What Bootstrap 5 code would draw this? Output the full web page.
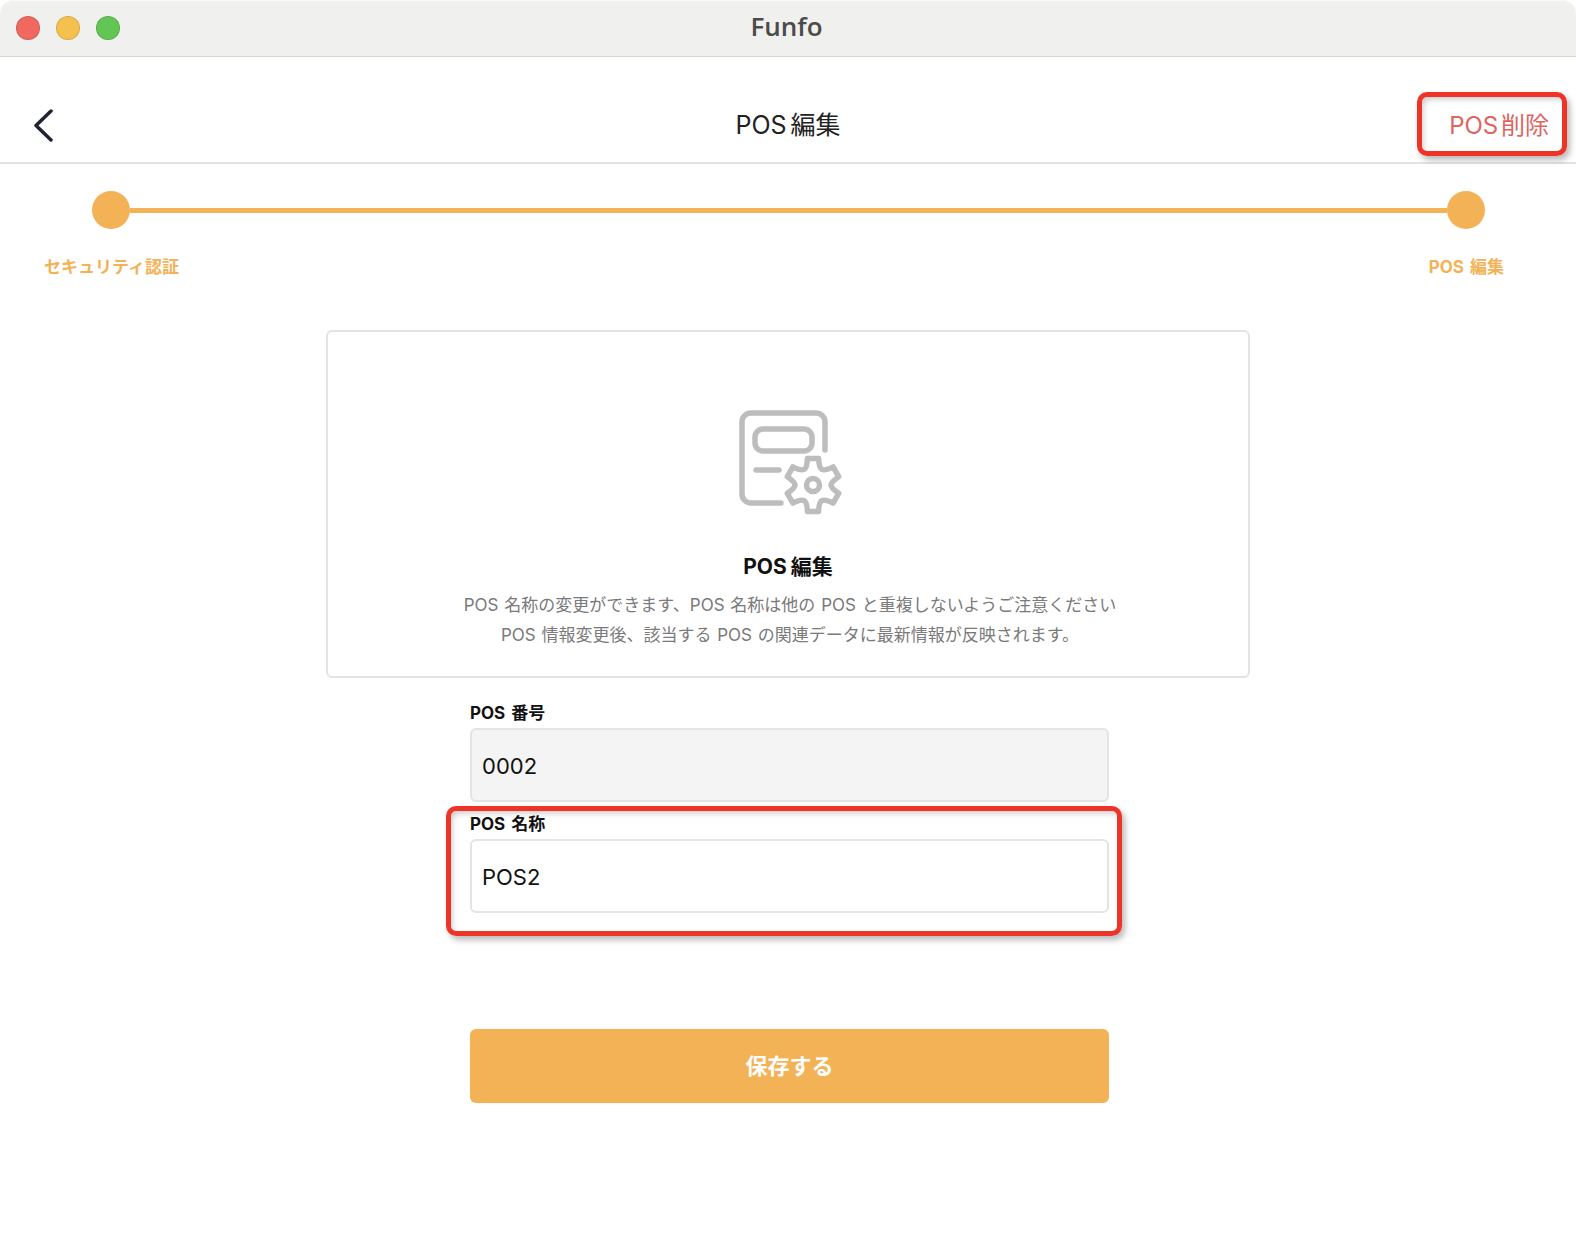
<!DOCTYPE html>
<html lang="ja">
<head>
<meta charset="utf-8">
<title>Funfo</title>
<link href="https://cdn.jsdelivr.net/npm/bootstrap@5.3.0/dist/css/bootstrap.min.css" rel="stylesheet">
<style>
html,body{height:100%;background:#fff;}
body{font-family:Inter,"Noto Sans CJK JP",sans-serif;color:#222;overflow:hidden;}
.app-window{position:relative;width:1576px;height:1238px;border-radius:13px;overflow:hidden;background:#fff;}
.title-strip{height:57px;background:#f0f0ef;border-bottom:1px solid #d4d4d4;border-radius:13px 13px 0 0;box-shadow:inset 0 1px 0 #fafafa;padding-left:16px;}
.light{width:24px;height:24px;border-radius:50%;border:1px solid rgba(0,0,0,.12);margin-right:16px;}
.light-r{background:#f0685f;}.light-y{background:#f6c04f;}.light-g{background:#62c654;}
.win-name{position:absolute;left:0;right:0;top:0;height:57px;line-height:53px;text-align:center;font-size:26px;font-weight:600;color:#4b4b4b;font-family:"Open Sans",sans-serif;padding-right:3px;}
.head-bar{height:107px;border-bottom:2px solid #e3e3e3;padding:33px 27px 0 33px;}
.head-name{font-size:25px;color:#222;font-weight:400;word-spacing:-3px;position:absolute;left:0;right:0;text-align:center;}
.del-link{font-size:24px;color:#dd6460;word-spacing:-4px;margin-left:auto;}
.step-wrap{padding:27px 91px 0 92px;height:166px;}
.step-dot{width:38px;height:38px;border-radius:50%;background:#f3b255;flex:none;}
.step-line{height:5px;background:#f3b255;flex:1;}
.step-labels{margin-top:26px;margin-left:-48px;margin-right:-19px;font-size:17px;font-weight:700;color:#f3b255;line-height:24px;word-spacing:2px;}
.info-box{width:924px;height:348px;margin:0 auto;border:2px solid #e4e4e4;border-radius:6px;padding-top:75px;text-align:center;}
.info-title{font-size:21px;font-weight:700;color:#111;margin-top:36px;line-height:28px;word-spacing:-1px;}
.info-text{font-size:17px;color:#7a7a7a;line-height:29.5px;margin-top:10px;word-spacing:1px;padding-left:4px;}
.form-col{width:639px;margin:0 auto 0 470px;padding-top:23px;}
.fld-label{font-size:17px;font-weight:700;color:#111;line-height:24px;margin-bottom:3px;display:block;word-spacing:2px;}
.fld-input.form-control{height:74px;border:2px solid #e4e4e4;border-radius:6px;font-size:22px;color:#111;padding:2px 10px 0;font-family:Inter,sans-serif;box-shadow:none;}
.fld-input.form-control[readonly]{background:#f4f4f4;}
.fld-gap{margin-top:10px;}
.save-btn.btn{width:100%;height:74px;margin-top:116px;background:#f3b255;border:0;border-radius:6px;color:#fff;font-size:22px;font-weight:700;}
.mark-box{position:absolute;border:5px solid #ee3426;border-radius:10px;box-shadow:3px 4px 6px rgba(0,0,0,.28),inset 3px 4px 6px -2px rgba(0,0,0,.22);pointer-events:none;}
.mark-a{left:1417px;top:92px;width:150px;height:64px;}
.mark-b{left:446px;top:806px;width:676px;height:130px;}
</style>
</head>
<body>
<div class="app-window">
  <div class="title-strip d-flex align-items-center">
    <span class="light light-r"></span><span class="light light-y"></span><span class="light light-g"></span>
  </div>
  <div class="win-name">Funfo</div>
  <div class="head-bar d-flex align-items-center position-relative">
    <svg width="22" height="34" viewBox="0 0 22 34" fill="none" stroke="#1f2333" stroke-width="3.5" stroke-linecap="round" stroke-linejoin="round"><path d="M18 2 L3 16.5 L18 31"/></svg>
    <div class="head-name">POS 編集</div>
    <div class="del-link">POS 削除</div>
  </div>
  <div class="step-wrap">
    <div class="d-flex align-items-center">
      <span class="step-dot"></span><span class="step-line"></span><span class="step-dot"></span>
    </div>
    <div class="step-labels d-flex justify-content-between">
      <span>セキュリティ認証</span><span>POS 編集</span>
    </div>
  </div>
  <div class="info-box">
    <svg width="110" height="110" viewBox="733 407 110 110" fill="none" stroke="#bdbdbd" stroke-width="5.5" stroke-linecap="round" stroke-linejoin="round" class="d-block mx-auto">
      <path d="M781 503 H751 a9 9 0 0 1 -9 -9 V422 a9 9 0 0 1 9 -9 H816 a9 9 0 0 1 9 9 V450"/>
      <rect x="755" y="429" width="57" height="22" rx="8"/>
      <path d="M756 470 H779"/>
      <g transform="translate(813 485)">
        <path d="M-5.6 -26.4 L5.6 -26.4 Q6 -17 9 -15.6 Q12 -14 20.1 -18.1 L25.7 -8.3 Q18 -3 18 0 Q18 3 25.7 8.3 L20.1 18.1 Q12 14 9 15.6 Q6 17 5.6 26.4 L-5.6 26.4 Q-6 17 -9 15.6 Q-12 14 -20.1 18.1 L-25.7 8.3 Q-18 3 -18 0 Q-18 -3 -25.7 -8.3 L-20.1 -18.1 Q-12 -14 -9 -15.6 Q-6 -17 -5.6 -26.4 Z"/>
        <circle cx="0" cy="0" r="6.5"/>
      </g>
    </svg>
    <div class="info-title">POS 編集</div>
    <div class="info-text">POS 名称の変更ができます、POS 名称は他の POS と重複しないようご注意ください<br>POS 情報変更後、該当する POS の関連データに最新情報が反映されます。</div>
  </div>
  <div class="form-col">
    <label class="fld-label" for="f1">POS 番号</label>
    <input id="f1" class="form-control fld-input" value="0002" readonly>
    <div class="fld-gap">
      <label class="fld-label" for="f2">POS 名称</label>
      <input id="f2" class="form-control fld-input" value="POS2">
    </div>
    <button class="btn save-btn" type="button">保存する</button>
  </div>
  <div class="mark-box mark-a"></div>
  <div class="mark-box mark-b"></div>
</div>
<script src="https://cdn.jsdelivr.net/npm/bootstrap@5.3.0/dist/js/bootstrap.bundle.min.js"></script>
</body>
</html>
